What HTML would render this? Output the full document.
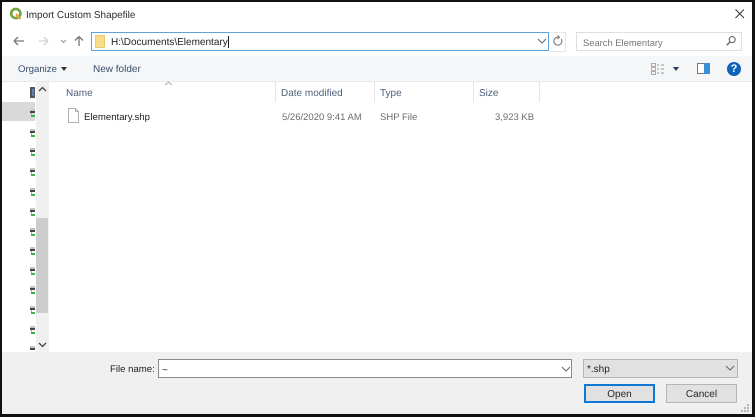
<!DOCTYPE html>
<html><head><meta charset="utf-8"><style>
html,body{margin:0;padding:0;width:755px;height:417px;overflow:hidden;background:#111}
body{position:relative;font-family:"Liberation Sans",sans-serif;font-size:10px;color:#333;text-rendering:geometricPrecision}
#w{position:absolute;left:0;top:0;width:755px;height:417px;filter:blur(.35px)}
.a{position:absolute;white-space:nowrap}
.d{position:absolute;left:30px;width:5px;height:9px}
.d i{position:absolute;display:block}
.d .c{left:0;top:0;width:5px;height:2px;background:#c4c4c4}
.d .k{left:0;top:2px;width:5px;height:2px;background:#444}
.d .g{left:1px;top:6px;width:4px;height:2px;background:#3db54a}
.d .v{left:1px;top:4px;width:1px;height:3px;background:#8fbf95}
.sep{position:absolute;top:82px;width:1px;height:20px;background:#e5e5e5}
.h{position:absolute;top:88px;color:#4c607a;font-size:10px;white-space:nowrap}
.r{position:absolute;top:112px;color:#6d6d6d;font-size:9.5px;white-space:nowrap}
</style></head><body><div id="w">
<div class="a" style="left:2px;top:2px;width:750px;height:412px;background:#fff"></div>
<!-- title -->
<svg class="a" style="left:9px;top:7px" width="14" height="14" viewBox="0 0 14 14"><circle cx="6.8" cy="6.5" r="4.6" fill="none" stroke="#6fa53a" stroke-width="2.6"/><path d="M7 7l4.5 5" stroke="#e8a33d" stroke-width="2.4"/></svg>
<div class="a" style="left:26px;top:10px;font-size:9.95px;color:#2b2b2b">Import Custom Shapefile</div>
<svg class="a" style="left:734px;top:8px" width="12" height="12" viewBox="0 0 12 12"><path d="M1.5 1.5l8.5 8.5M10 1.5l-8.5 8.5" stroke="#333" stroke-width="1" fill="none"/></svg>
<!-- nav -->
<svg class="a" style="left:11px;top:34px" width="90" height="14" viewBox="0 0 90 14" fill="none"><path d="M3 7h10M3 7l4-4M3 7l4 4" stroke="#777" stroke-width="1.3"/><path d="M28 7h9M37 7l-4-4M37 7l-4 4" stroke="#d0d0d0" stroke-width="1.3"/><path d="M50 6l2.5 2.5L55 6" stroke="#999" stroke-width="1.1"/><path d="M68 12V2.5M68 2.5l-4 4M68 2.5l4 4" stroke="#777" stroke-width="1.3"/></svg>
<div class="a" style="left:91px;top:32px;width:456px;height:17px;border:1px solid #5da3dc;background:#fff"></div>
<div class="a" style="left:95px;top:35px;width:10px;height:13px;background:#f8dc8a;border:1px solid #eccb6c;box-sizing:border-box"></div>
<div class="a" style="left:111px;top:37px;font-size:10px;color:#222">H:\Documents\Elementary</div>
<div class="a" style="left:228px;top:36px;width:1px;height:12px;background:#222"></div>
<svg class="a" style="left:537px;top:38px" width="10" height="7" viewBox="0 0 10 7"><path d="M1 1l4 4 4-4" stroke="#666" stroke-width="1" fill="none"/></svg>
<div class="a" style="left:549px;top:32px;width:16px;height:18px;border:1px solid #e6e6e6;border-left:0;background:#fff"></div>
<svg class="a" style="left:552px;top:35px" width="12" height="12" viewBox="0 0 12 12"><path d="M9.3 4A4 4 0 1 1 5 2.2H7" stroke="#777" stroke-width="1.1" fill="none"/><path d="M5.6 .4L7.5 2.2 5.6 4" stroke="#777" fill="none"/></svg>
<div class="a" style="left:576px;top:32px;width:164px;height:17px;border:1px solid #dfdfdf;background:#fff"></div>
<div class="a" style="left:583px;top:37px;font-size:9.4px;color:#777">Search Elementary</div>
<svg class="a" style="left:725px;top:35px" width="12" height="12" viewBox="0 0 12 12"><circle cx="7.2" cy="4.6" r="3" fill="none" stroke="#666" stroke-width="1.1"/><path d="M5 7L1.8 10.2" stroke="#666" stroke-width="1.5"/></svg>
<!-- toolbar -->
<div class="a" style="left:2px;top:56px;width:750px;height:25px;background:#f5f6f7;border-bottom:1px solid #eaeaea"></div>
<div class="a" style="left:18px;top:64px;color:#39506b;font-size:9.6px">Organize</div>
<div class="a" style="left:61px;top:67px;width:0;height:0;border:3px solid transparent;border-top:4px solid #333;border-bottom:0"></div>
<div class="a" style="left:93px;top:64px;color:#39506b;font-size:10px">New folder</div>
<svg class="a" style="left:651px;top:63px" width="14" height="12" viewBox="0 0 14 12"><rect x=".5" y=".5" width="4" height="3" fill="none" stroke="#aaa"/><rect x=".5" y="4.5" width="4" height="3" fill="none" stroke="#d0a8a8"/><rect x=".5" y="8.5" width="4" height="3" fill="none" stroke="#aaa"/><path d="M6 2h2M10 2h3M6 6h2M10 6h3M6 10h2M10 10h3" stroke="#999"/></svg>
<div class="a" style="left:673px;top:67px;width:0;height:0;border:3px solid transparent;border-top:4px solid #223a55;border-bottom:0"></div>
<div class="a" style="left:697px;top:63px;width:12px;height:9px;background:#fff;border:1px solid #777;border-right:0;box-sizing:content-box"></div>
<div class="a" style="left:704px;top:63px;width:6px;height:11px;background:#3c8ed6"></div>
<div class="a" style="left:727px;top:62px;width:14px;height:14px;border-radius:50%;background:#0e62b8;color:#fff;font-weight:bold;font-size:11px;line-height:14px;text-align:center">?</div>
<!-- sidebar -->
<div class="a" style="left:2px;top:102px;width:33px;height:19px;background:#d9d9d9"></div>
<div class="a" style="left:30px;top:87px;width:5px;height:11px;background:#555"></div>
<div class="a" style="left:32px;top:89px;width:2px;height:7px;background:#5a7fc0"></div>
<div class="d" style="top:109px"><i class="c"></i><i class="k"></i><i class="v"></i><i class="g"></i></div>
<div class="d" style="top:129px"><i class="c"></i><i class="k"></i><i class="v"></i><i class="g"></i></div>
<div class="d" style="top:148px"><i class="c"></i><i class="k"></i><i class="v"></i><i class="g"></i></div>
<div class="d" style="top:168px"><i class="c"></i><i class="k"></i><i class="v"></i><i class="g"></i></div>
<div class="d" style="top:188px"><i class="c"></i><i class="k"></i><i class="v"></i><i class="g"></i></div>
<div class="d" style="top:208px"><i class="c"></i><i class="k"></i><i class="v"></i><i class="g"></i></div>
<div class="d" style="top:228px"><i class="c"></i><i class="k"></i><i class="v"></i><i class="g"></i></div>
<div class="d" style="top:247px"><i class="c"></i><i class="k"></i><i class="v"></i><i class="g"></i></div>
<div class="d" style="top:267px"><i class="c"></i><i class="k"></i><i class="v"></i><i class="g"></i></div>
<div class="d" style="top:286px"><i class="c"></i><i class="k"></i><i class="v"></i><i class="g"></i></div>
<div class="d" style="top:306px"><i class="c"></i><i class="k"></i><i class="v"></i><i class="g"></i></div>
<div class="d" style="top:326px"><i class="c"></i><i class="k"></i><i class="v"></i><i class="g"></i></div>
<div class="d" style="top:346px"><i class="c"></i><i class="k"></i></div>
<!-- scrollbar -->
<div class="a" style="left:36px;top:82px;width:13px;height:270px;background:#f0f0f0"></div>
<div class="a" style="left:36px;top:218px;width:12px;height:95px;background:#cdcdcd"></div>
<svg class="a" style="left:38px;top:86px" width="9" height="7" viewBox="0 0 9 7"><path d="M1 5l3.5-3.5L8 5" stroke="#444" stroke-width="1.3" fill="none"/></svg>
<svg class="a" style="left:38px;top:341px" width="9" height="7" viewBox="0 0 9 7"><path d="M1 2l3.5 3.5L8 2" stroke="#444" stroke-width="1.3" fill="none"/></svg>
<!-- header -->
<svg class="a" style="left:164px;top:81px" width="9" height="5" viewBox="0 0 9 5"><path d="M1 4l3.5-3L8 4" stroke="#aaa" fill="none"/></svg>
<div class="h" style="left:66px">Name</div><div class="sep" style="left:275px"></div>
<div class="h" style="left:281px">Date modified</div><div class="sep" style="left:374px"></div>
<div class="h" style="left:380px">Type</div><div class="sep" style="left:473px"></div>
<div class="h" style="left:479px">Size</div><div class="sep" style="left:539px"></div>
<!-- row -->
<svg class="a" style="left:68px;top:108px" width="11" height="15" viewBox="0 0 11 15"><path d="M.5 .5h7l3 3v11H.5z" fill="#fff" stroke="#b0b0b0"/><path d="M7.5 .5v3h3" fill="none" stroke="#b0b0b0"/></svg>
<div class="a" style="left:84px;top:112px;font-size:9.6px;color:#222">Elementary.shp</div>
<div class="r" style="left:282px">5/26/2020 9:41 AM</div>
<div class="r" style="left:380px">SHP File</div>
<div class="r" style="left:495px">3,923 KB</div>
<!-- footer -->
<div class="a" style="left:2px;top:352px;width:750px;height:62px;background:#f0f0f0"></div>
<div class="a" style="left:110px;top:364px;font-size:9.6px;color:#222">File name:</div>
<div class="a" style="left:158px;top:359px;width:412px;height:17px;border:1px solid #8a8a8a;background:#fff"></div>
<div class="a" style="left:162px;top:365px;font-size:10px;color:#222">~</div>
<svg class="a" style="left:561px;top:366px" width="10" height="7" viewBox="0 0 10 7"><path d="M1 1l4 4 4-4" stroke="#666" fill="none"/></svg>
<div class="a" style="left:583px;top:359px;width:153px;height:17px;border:1px solid #b5b5b5;background:#e1e1e1"></div>
<div class="a" style="left:587px;top:364px;font-size:10px;color:#222">*.shp</div>
<svg class="a" style="left:725px;top:365px" width="10" height="7" viewBox="0 0 10 7"><path d="M1 1l4 4 4-4" stroke="#666" fill="none"/></svg>
<div class="a" style="left:584px;top:384px;width:67px;height:15px;border:2px solid #0f78d4;background:#e1e1e1;text-align:center;line-height:17px;font-size:10px;color:#222">Open</div>
<div class="a" style="left:666px;top:384px;width:69px;height:17px;border:1px solid #b5b5b5;background:#e1e1e1;text-align:center;line-height:19px;font-size:10px;color:#222">Cancel</div>
<svg class="a" style="left:741px;top:404px" width="9" height="9" viewBox="0 0 9 9" fill="#b5b5b5"><rect x="6" y="0" width="2" height="2"/><rect x="3" y="3" width="2" height="2"/><rect x="6" y="3" width="2" height="2"/><rect x="0" y="6" width="2" height="2"/><rect x="3" y="6" width="2" height="2"/><rect x="6" y="6" width="2" height="2"/></svg>
</div></body></html>
